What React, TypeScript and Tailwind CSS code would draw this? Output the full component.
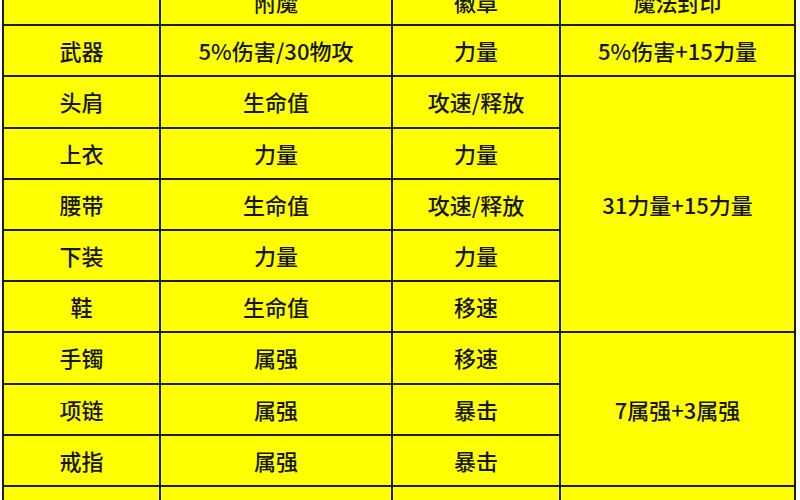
const rows = [
  { slot: "武器", enchant: "5%伤害/30物攻", emblem: "力量" },
  { slot: "头肩", enchant: "生命值", emblem: "攻速/释放" },
  { slot: "上衣", enchant: "力量", emblem: "力量" },
  { slot: "腰带", enchant: "生命值", emblem: "攻速/释放" },
  { slot: "下装", enchant: "力量", emblem: "力量" },
  { slot: "鞋", enchant: "生命值", emblem: "移速" },
  { slot: "手镯", enchant: "属强", emblem: "移速" },
  { slot: "项链", enchant: "属强", emblem: "暴击" },
  { slot: "戒指", enchant: "属强", emblem: "暴击" },
  { slot: "辅助装备", enchant: "力量", emblem: "力量" },
];

// col 4 spans: row index -> [text, span]
const seals: Record<number, [string, string]> = {
  0: ["5%伤害+15力量", "row-span-1"],
  1: ["31力量+15力量", "row-span-5"],
  6: ["7属强+3属强", "row-span-3"],
  9: ["力量", "row-span-1"],
};

const cell = "bg-[#ffff00] flex items-center justify-center";

export default function App() {
  return (
    <div
      className="w-[800px] h-[500px] overflow-hidden bg-white text-[22px] font-medium text-[#161616]"
      style={{ fontFamily: '"Noto Sans CJK SC", "Noto Sans", sans-serif' }}
    >
      <div className="ml-[2px] -mt-[27px] w-[794px] bg-[#1c1c14] p-[2px] grid grid-cols-[155px_230px_166px_233px] auto-rows-[49.2px] gap-[2px]">
        <div className={cell}></div>
        <div className={`${cell} pt-[4px]`}>附魔</div>
        <div className={`${cell} pt-[4px]`}>徽章</div>
        <div className={`${cell} pt-[4px]`}>魔法封印</div>
        {rows.map((r, i) => (
          <>
            <div key={`s${i}`} className={cell} style={{ gridRow: i + 2, gridColumn: 1 }}>
              {r.slot}
            </div>
            <div key={`e${i}`} className={cell} style={{ gridRow: i + 2, gridColumn: 2 }}>
              {r.enchant}
            </div>
            <div key={`b${i}`} className={cell} style={{ gridRow: i + 2, gridColumn: 3 }}>
              {r.emblem}
            </div>
            {seals[i] && (
              <div
                key={`m${i}`}
                className={`${cell} ${seals[i][1]}`}
                style={{ gridRowStart: i + 2, gridColumn: 4 }}
              >
                {seals[i][0]}
              </div>
            )}
          </>
        ))}
      </div>
    </div>
  );
}
